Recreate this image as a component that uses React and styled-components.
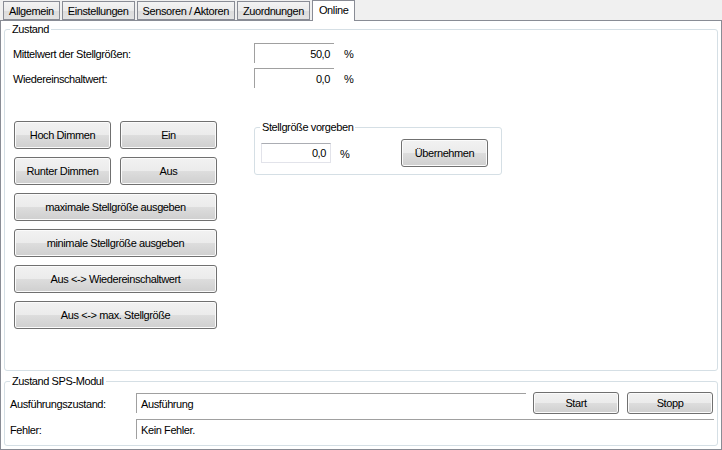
import React from 'react';
import styled, { createGlobalStyle } from 'styled-components';

const GlobalStyle = createGlobalStyle`
  html, body {
    margin: 0;
    padding: 0;
    background: #f0f0f0;
  }
  body {
    font-family: "Liberation Sans", Arial, sans-serif;
    font-size: 11px;
    letter-spacing: -0.4px;
    color: #000;
  }
`;

const Page = styled.div`
  width: 722px;
  height: 450px;
  background: #f0f0f0;
  display: flex;
  flex-direction: column;
`;

const TabBar = styled.div`
  display: flex;
  align-items: flex-end;
  gap: 2px;
  height: 20px;
  padding-left: 3px;
  position: relative;
  z-index: 1;
`;

const Tab = styled.div`
  box-sizing: border-box;
  height: ${p => (p.$active ? '21px' : '19px')};
  margin-bottom: ${p => (p.$active ? '-1px' : '0')};
  padding: ${p => (p.$active ? '1px 6px 0' : '1px 5px 0')};
  border: 1px solid #898c95;
  border-bottom: ${p => (p.$active ? 'none' : '1px solid #898c95')};
  background: ${p => (p.$active ? '#fff' : 'linear-gradient(#f3f3f3, #ebebeb 50%, #dcdcdc 51%, #e3e3e3)')};
  line-height: 16px;
  white-space: nowrap;
`;

const Panel = styled.div`
  box-sizing: border-box;
  height: 430px;
  border: 1px solid #898c95;
  background: #fff;
  padding: 2px 3px 3px;
  display: flex;
  flex-direction: column;
  gap: 4px;
`;

const Group = styled.fieldset`
  box-sizing: border-box;
  margin: 0;
  padding: 0;
  min-width: 0;
  border: 1px solid #d5dfe5;
  border-radius: 3px;
  height: ${p => p.$h}px;
  width: ${p => (p.$w ? `${p.$w}px` : 'auto')};
  display: flex;
  flex-direction: column;
`;

const Legend = styled.legend`
  margin-left: 5px;
  padding: 0 2px;
  line-height: 13px;
  height: 13px;
`;

const Content = styled.div`
  display: flex;
  flex-direction: column;
  padding: ${p => p.$pad};
  gap: ${p => p.$gap || 5}px;
`;

const Row = styled.div`
  display: flex;
  align-items: center;
  height: ${p => p.$h || 20}px;
`;

const Label = styled.div`
  width: ${p => p.$w}px;
  flex: none;
  padding-top: 2px;
`;

const ValueBox = styled.div`
  box-sizing: border-box;
  width: ${p => p.$w}px;
  height: 20px;
  flex: none;
  border-top: 1px solid #a0a0a0;
  border-left: 1px solid #a0a0a0;
  padding: 3px 4px 0;
  text-align: ${p => (p.$right ? 'right' : 'left')};
  line-height: 15px;
`;

const EditBox = styled.div`
  box-sizing: border-box;
  width: 70px;
  height: 20px;
  flex: none;
  border: 1px solid #e2e3ea;
  border-top-color: #abadb3;
  padding: 2px 4px 0 0;
  text-align: right;
  line-height: 15px;
`;

const Unit = styled.span`
  margin-left: ${p => p.$ml || 10}px;
  padding-top: 2px;
`;

const Main = styled.div`
  display: flex;
  align-items: flex-start;
  margin-top: 33px;
`;

const ButtonGrid = styled.div`
  display: grid;
  grid-template-columns: 97px 97px;
  grid-auto-rows: 28px;
  gap: 8px 9px;
  margin-left: 9px;
  width: 203px;
`;

const Button = styled.button`
  box-sizing: border-box;
  width: ${p => (p.$w ? `${p.$w}px` : '100%')};
  height: ${p => (p.$h ? `${p.$h}px` : '100%')};
  grid-column: ${p => (p.$wide ? '1 / span 2' : 'auto')};
  margin-left: ${p => p.$ml || 0}px;
  margin-right: ${p => p.$mr || 0}px;
  border: 1px solid #707070;
  border-radius: 3px;
  background: linear-gradient(#f2f2f2, #ebebeb 50%, #dddddd 51%, #cfcfcf);
  box-shadow: inset 0 0 0 1px #fbfbfb;
  font: inherit;
  letter-spacing: inherit;
  color: #000;
  padding: 0;
  flex: none;
`;

const SideGroup = styled.div`
  margin-left: 37px;
`;

const Spacer = styled.div`
  flex: 1;
`;

export default function App() {
  return (
    <Page>
      <GlobalStyle />
      <TabBar>
        <Tab>Allgemein</Tab>
        <Tab>Einstellungen</Tab>
        <Tab>Sensoren / Aktoren</Tab>
        <Tab>Zuordnungen</Tab>
        <Tab $active>Online</Tab>
      </TabBar>
      <Panel>
        <Group $h={349}>
          <Legend>Zustand</Legend>
          <Content $pad="7px 0 0 8px">
            <Row>
              <Label $w={241}>Mittelwert der Stellgrößen:</Label>
              <ValueBox $w={80} $right>50,0</ValueBox>
              <Unit>%</Unit>
            </Row>
            <Row>
              <Label $w={241}>Wiedereinschaltwert:</Label>
              <ValueBox $w={80} $right>0,0</ValueBox>
              <Unit>%</Unit>
            </Row>
          </Content>
          <Main>
            <ButtonGrid>
              <Button>Hoch Dimmen</Button>
              <Button>Ein</Button>
              <Button>Runter Dimmen</Button>
              <Button>Aus</Button>
              <Button $wide>maximale Stellgröße ausgeben</Button>
              <Button $wide>minimale Stellgröße ausgeben</Button>
              <Button $wide>Aus &lt;-&gt; Wiedereinschaltwert</Button>
              <Button $wide>Aus &lt;-&gt; max. Stellgröße</Button>
            </ButtonGrid>
            <SideGroup>
              <Group $h={54} $w={248}>
                <Legend>Stellgröße vorgeben</Legend>
                <Content $pad="5px 0 0 6px">
                  <Row $h={28}>
                    <EditBox>0,0</EditBox>
                    <Unit $ml={9}>%</Unit>
                    <Spacer />
                    <Button $w={87} $h={28} $mr={13}>Übernehmen</Button>
                  </Row>
                </Content>
              </Group>
            </SideGroup>
          </Main>
        </Group>
        <Group $h={71}>
          <Legend>Zustand SPS-Modul</Legend>
          <Content $pad="4px 0 0 5px">
            <Row $h={22}>
              <Label $w={126}>Ausführungszustand:</Label>
              <ValueBox $w={390}>Ausführung</ValueBox>
              <Button $w={86} $h={22} $ml={7}>Start</Button>
              <Button $w={86} $h={22} $ml={8}>Stopp</Button>
            </Row>
            <Row>
              <Label $w={126}>Fehler:</Label>
              <ValueBox $w={578}>Kein Fehler.</ValueBox>
            </Row>
          </Content>
        </Group>
      </Panel>
    </Page>
  );
}
